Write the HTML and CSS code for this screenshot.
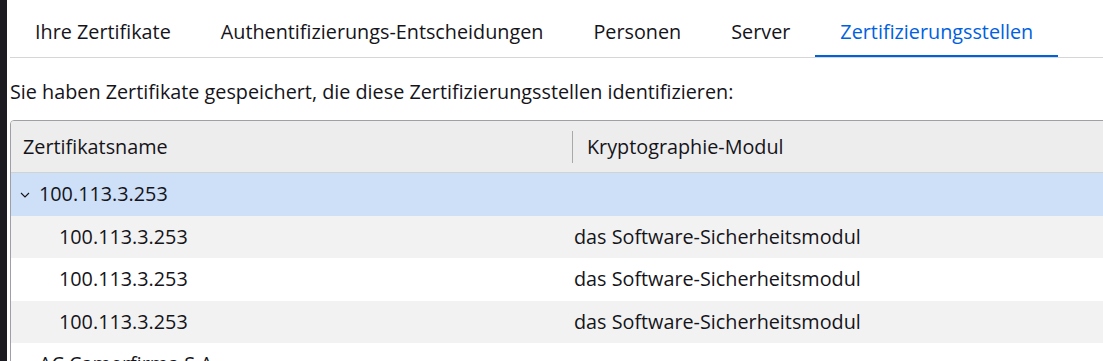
FILE: index.html
```html
<!DOCTYPE html>
<html lang="de">
<head>
<meta charset="utf-8">
<title>Zertifikatverwaltung</title>
<link rel="stylesheet" href="styles.css">
</head>
<body>
<div class="app">
  <div class="edge"></div>
  <div class="main">
    <nav class="tabs">
      <div class="tab">Ihre Zertifikate</div>
      <div class="tab">Authentifizierungs-Entscheidungen</div>
      <div class="tab">Personen</div>
      <div class="tab">Server</div>
      <div class="tab active">Zertifizierungsstellen</div>
    </nav>
    <p class="intro">Sie haben Zertifikate gespeichert, die diese Zertifizierungsstellen identifizieren:</p>
    <div class="tree">
      <div class="tree-head">
        <div class="hcell">Zertifikatsname</div>
        <div class="hcell hcell-module"><span class="sep"></span>Kryptographie-Modul</div>
      </div>
      <div class="row selected">
        <div class="cell cell-parent"><svg class="twisty" width="10" height="6" viewBox="0 0 10 6"><path d="M1 1 L5 5 L9 1" fill="none" stroke="#15141a" stroke-width="1.1"/></svg>100.113.3.253</div>
        <div class="cell cell-module"></div>
      </div>
      <div class="row alt">
        <div class="cell cell-child">100.113.3.253</div>
        <div class="cell cell-module">das Software-Sicherheitsmodul</div>
      </div>
      <div class="row">
        <div class="cell cell-child">100.113.3.253</div>
        <div class="cell cell-module">das Software-Sicherheitsmodul</div>
      </div>
      <div class="row alt">
        <div class="cell cell-child">100.113.3.253</div>
        <div class="cell cell-module">das Software-Sicherheitsmodul</div>
      </div>
      <div class="row">
        <div class="cell cell-parent"><svg class="twisty" width="10" height="6" viewBox="0 0 10 6"><path d="M1 1 L5 5 L9 1" fill="none" stroke="#15141a" stroke-width="1.1"/></svg>AC Camerfirma S.A.</div>
        <div class="cell cell-module"></div>
      </div>
    </div>
  </div>
</div>
</body>
</html>
```

FILE: styles.css
```css
html, body {
  margin: 0;
  padding: 0;
  background: #ffffff;
  overflow: hidden;
  height: 361px;
}

body {
  font-family: "Open Sans", "Noto Sans", sans-serif;
  font-size: 19.8px;
  color: #15141a;
}

.app {
  display: flex;
  height: 361px;
}

.edge {
  flex: 0 0 7px;
  background: #1c1b22;
}

.main {
  flex: 1 1 auto;
  padding-left: 3px;
  min-width: 0;
}

.tabs {
  display: flex;
  border-bottom: 1px solid #d6d6d9;
}

.tab {
  padding: 20px 25px 11px;
  line-height: 24px;
  border-bottom: 2px solid transparent;
  white-space: nowrap;
}

.tab.active {
  color: #0061e0;
  border-bottom-color: #0061e0;
}

.intro {
  margin: 22px 0 16px;
  line-height: 24px;
  white-space: nowrap;
}

.tree {
  border: 1px solid #9f9fa6;
  border-radius: 4px;
  width: 1120px;
  overflow: hidden;
}

.tree-head {
  display: grid;
  grid-template-columns: 561px 1fr;
  height: 51px;
  background: #ededed;
  border-bottom: 1px solid #d2d2d4;
}

.hcell {
  display: flex;
  align-items: center;
  padding-left: 12px;
  line-height: 24px;
  position: relative;
  white-space: nowrap;
}

.hcell-module {
  padding-left: 15px;
}

.sep {
  position: absolute;
  left: 0;
  top: 10px;
  bottom: 9px;
  width: 1px;
  background: #a8a8ae;
}

.row {
  display: grid;
  grid-template-columns: 561px 1fr;
  height: 42.5px;
  background: #ffffff;
}

.row.alt {
  background: #f2f2f2;
}

.row.selected {
  background: #cde0f7;
}

.cell {
  display: flex;
  align-items: center;
  line-height: 24px;
  white-space: nowrap;
}

.cell-parent {
  padding-left: 9px;
}

.twisty {
  margin: 2px 9px 0 0;
  flex: 0 0 auto;
}

.cell-child {
  padding-left: 48px;
}

.cell-module {
  padding-left: 2px;
}
```
